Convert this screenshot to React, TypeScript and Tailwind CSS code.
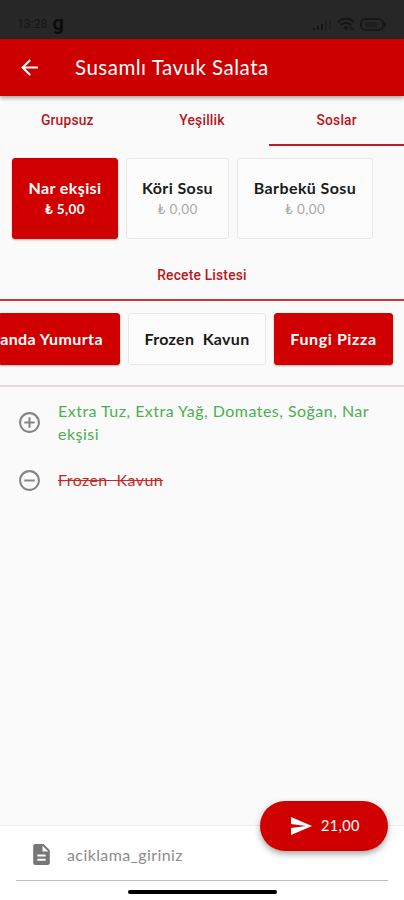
import {
  MdAddCircleOutline,
  MdArrowBack,
  MdDescription,
  MdRemoveCircleOutline,
  MdSend,
} from "react-icons/md";

const tabs = ["Grupsuz", "Yeşillik", "Soslar"];

const sauces = [
  { name: "Nar ekşisi", price: "5,00", width: "w-[106px]", selected: true },
  { name: "Köri Sosu", price: "0,00", width: "w-[103px]", selected: false },
  { name: "Barbekü Sosu", price: "0,00", width: "w-[136px]", selected: false },
];

const recipes = [
  { name: "anda Yumurta", style: "w-[120px] pr-[16px] justify-end rounded-r-[3px] tracking-[0.400px]", selected: true },
  { name: "Frozen  Kavun", style: "w-[138px] justify-center rounded-[3px] tracking-[0.3px]", selected: false },
  { name: "Fungi Pizza", style: "w-[119px] justify-center rounded-[3px] tracking-[0.6px]", selected: true },
];

const selectedCard = "bg-[#d00000] text-white border-[#d00000] shadow-[0_1px_2px_rgba(0,0,0,0.3)]";
const plainCard = "bg-[#fcfcfc] text-[#1a1a1a] border-[#e8e8e8]";

function StatusBar() {
  return (
    <div className="h-[39px] shrink-0 bg-[#272727] text-[#151515] flex items-start justify-between px-[17px] pt-[15px]">
      <div className="flex items-center h-[18px] gap-[5px]">
        <span className="text-[12px] leading-[18px] font-[Roboto] tracking-[0.1px]">13:28</span>
        <span className="text-[20px] leading-[16px] font-bold font-[Roboto] -mt-[3px] text-[#0c0c0c]">g</span>
      </div>
      <div className="flex items-center h-[18px] gap-[5px]">
        <svg width="20" height="13" viewBox="0 0 20 13" fill="currentColor">
          <path d="M1 10h2v2H1zM5 8h2v4H5zM9 6h2v6H9z" />
          <path opacity="0.35" d="M13 3h2v9h-2zM17 1h2v11h-2z" />
        </svg>
        <svg width="18" height="14" viewBox="0 0 18 14" fill="none" stroke="currentColor" strokeWidth="2">
          <path d="M1 5q8-7 16 0M4 8q5-4.500 10 0" />
          <path d="M6.500 10.500Q9 8 11.500 10.500L9 13z" fill="currentColor" stroke="none" />
          <path d="M14 9v4M16 11v2" strokeWidth="1" />
        </svg>
        <svg width="27" height="13" viewBox="0 0 27 13" fill="none" stroke="currentColor" strokeWidth="1.500">
          <rect x="1" y="1" width="22" height="11" rx="4" />
          <rect x="5" y="4" width="12" height="5" rx="1.500" fill="currentColor" stroke="none" opacity="0.5" />
          <path d="M25 4.500v4" strokeWidth="2" />
        </svg>
      </div>
    </div>
  );
}

export default function App() {
  return (
    <div className="relative w-full h-screen overflow-hidden flex flex-col bg-[#fafafa] font-[Lato,'Noto_Sans',sans-serif]">
      <StatusBar />
      <header className="relative h-[57px] shrink-0 bg-[#cc0000] text-white flex items-center pl-[17px] shadow-[0_2px_4px_rgba(0,0,0,0.35)]">
        <MdArrowBack className="size-[25px]" />
        <h1 className="ml-[33px] pb-[2px] text-[20.500px] leading-[24px] tracking-[0.500px] whitespace-nowrap">Susamlı Tavuk Salata</h1>
      </header>

      <nav className="flex h-[50px] shrink-0 font-[Roboto] text-[13.800px] font-medium text-[#b9161c]">
        {tabs.map((tab) => (
          <button
            key={tab}
            className={`flex-1 pt-px tracking-[0.2px] border-b-[2px] ${tab === "Soslar" ? "border-[#bd2024]" : "border-transparent"}`}
          >
            {tab}
          </button>
        ))}
      </nav>

      <div className="flex gap-2 pt-[12px] pl-[12px] shrink-0">
        {sauces.map((sauce) => (
          <div
            key={sauce.name}
            className={`${sauce.width} h-[81px] shrink-0 rounded-[3px] border flex flex-col items-center justify-center pb-px ${sauce.selected ? selectedCard : plainCard}`}
          >
            <span className="text-[16px] leading-[22px] font-bold tracking-[0.400px] whitespace-nowrap">{sauce.name}</span>
            <span className={`text-[13.500px] leading-[20px] tracking-[0.400px] ${sauce.selected ? "font-bold" : "text-[#aaaaaa]"}`}>
              ₺ {sauce.price}
            </span>
          </div>
        ))}
      </div>

      <h2 className="mt-[24px] h-[38px] shrink-0 pt-[2px] border-b-[2px] border-[#c43a3a] text-center font-[Roboto] text-[13.800px] leading-[20px] font-medium tracking-[0.2px] text-[#b9161c]">
        Recete Listesi
      </h2>

      <div className="flex shrink-0 h-[86px] pt-[12px] gap-2 border-b-[2px] border-[#ecd8da]">
        {recipes.map((recipe) => (
          <div
            key={recipe.name}
            className={`${recipe.style} h-[52px] shrink-0 border flex items-center ${recipe.selected ? selectedCard : plainCard}`}
          >
            <span className="text-[16px] font-bold whitespace-pre">{recipe.name}</span>
          </div>
        ))}
      </div>

      <main className="flex-1 pl-[17px] pr-[24px] pt-[12px] text-[16px] leading-[23px]">
        <div className="flex items-center">
          <MdAddCircleOutline className="size-[25px] shrink-0 text-[#858585]" />
          <p className="ml-[16px] text-[#4caf50] tracking-[0.480px]">Extra Tuz, Extra Yağ, Domates, Soğan, Nar ekşisi</p>
        </div>
        <div className="flex items-center mt-[23px]">
          <MdRemoveCircleOutline className="size-[25px] shrink-0 text-[#858585]" />
          <p className="ml-[16px] pb-[2px] text-[#c62828] line-through whitespace-pre tracking-[0.400px]">Frozen  Kavun</p>
        </div>
      </main>

      <footer className="relative h-[75px] shrink-0 bg-white border-t border-[#eeeeee] px-[16px]">
        <div className="h-[55px] flex items-center pl-[13px] pt-[3px] border-b border-[#bdbdbd]">
          <MdDescription className="size-[25px] text-[#777777]" />
          <input
            className="ml-[13px] w-[170px] bg-transparent outline-none text-[16px] tracking-[0.400px] placeholder:text-[#8c8c8c]"
            placeholder="aciklama_giriniz"
          />
        </div>
        <div className="mx-auto mt-[9px] w-[149px] h-[4px] rounded-full bg-black" />
        <button className="absolute right-[16px] -top-[25px] w-[128px] h-[50px] rounded-full bg-[#d00000] text-white flex items-center pl-[29px] shadow-[0_3px_6px_rgba(0,0,0,0.35)]">
          <MdSend className="size-[24px]" />
          <span className="ml-[8px] text-[14.500px] tracking-[0.350px]">21,00</span>
        </button>
      </footer>
    </div>
  );
}
